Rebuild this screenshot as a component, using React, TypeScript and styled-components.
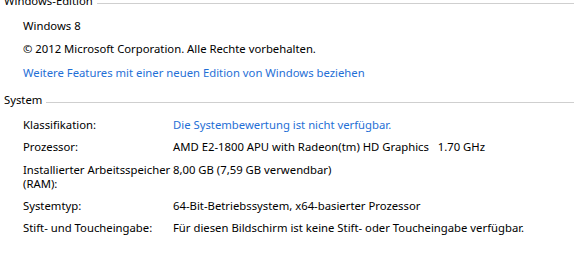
import { FC, ReactNode } from 'react';
import styled, { createGlobalStyle } from 'styled-components';

const GlobalStyle = createGlobalStyle`
    html, body {
        margin: 0;
        padding: 0;
        background: #ffffff;
        overflow: hidden;
    }
    body {
        font-family: 'Noto Sans', 'Open Sans', sans-serif;
        font-size: 11.3px;
        color: #000000;
    }
`;

const Page = styled.div`
    width: 574px;
    height: 257px;
    margin-top: -7px;
    display: flex;
    flex-direction: column;
`;

const Section = styled.section<{ $gap: number }>`
    display: flex;
    flex-direction: column;
    margin-bottom: ${(p) => p.$gap}px;
`;

const Header = styled.div`
    display: flex;
    align-items: flex-start;
    padding-left: 4px;
    line-height: 15px;
    height: 15px;
`;

const HeaderLine = styled.div`
    flex: 1;
    height: 1px;
    margin-left: 4px;
    margin-top: 10px;
    background: #cfcfcf;
`;

const Body = styled.div<{ $top: number; $gap: number }>`
    display: flex;
    flex-direction: column;
    gap: ${(p) => p.$gap}px;
    padding-left: 23px;
    padding-top: ${(p) => p.$top}px;
`;

const Line = styled.div`
    line-height: 15px;
`;

const Link = styled.a`
    color: #1f6fd6;
    text-decoration: none;
    line-height: 15px;
    margin-top: 1px;
    cursor: pointer;
    &:hover {
        text-decoration: underline;
    }
`;

const Row = styled.div`
    display: grid;
    grid-template-columns: 150px 1fr;
    line-height: 14px;
`;

const Label = styled.div`
    white-space: nowrap;
`;

const Value = styled.div<{ $link?: boolean }>`
    white-space: pre;
    color: ${(p) => (p.$link ? '#1f6fd6' : '#000000')};
`;

const Group: FC<{ title: string; gap: number; children: ReactNode }> = ({
    title,
    gap,
    children,
}) => (
    <Section $gap={gap}>
        <Header>
            <span>{title}</span>
            <HeaderLine />
        </Header>
        {children}
    </Section>
);

const rows: [ReactNode, string, boolean?][] = [
    ['Klassifikation:', 'Die Systembewertung ist nicht verfügbar.', true],
    ['Prozessor:', 'AMD E2-1800 APU with Radeon(tm) HD Graphics   1.70 GHz'],
    [
        <>
            Installierter Arbeitsspeicher
            <br />
            (RAM):
        </>,
        '8,00 GB (7,59 GB verwendbar)',
    ],
    ['Systemtyp:', '64-Bit-Betriebssystem, x64-basierter Prozessor'],
    [
        'Stift- und Toucheingabe:',
        'Für diesen Bildschirm ist keine Stift- oder Toucheingabe verfügbar.',
    ],
];

export default function App() {
    return (
        <>
            <GlobalStyle />
            <Page>
                <Group title="Windows-Edition" gap={12}>
                    <Body $top={10} $gap={8}>
                        <Line>Windows 8</Line>
                        <Line>© 2012 Microsoft Corporation. Alle Rechte vorbehalten.</Line>
                        <Link>Weitere Features mit einer neuen Edition von Windows beziehen</Link>
                    </Body>
                </Group>
                <Group title="System" gap={0}>
                    <Body $top={11} $gap={8.3}>
                        {rows.map(([label, value, link], i) => (
                            <Row key={i}>
                                <Label>{label}</Label>
                                <Value $link={link}>{value}</Value>
                            </Row>
                        ))}
                    </Body>
                </Group>
            </Page>
        </>
    );
}
